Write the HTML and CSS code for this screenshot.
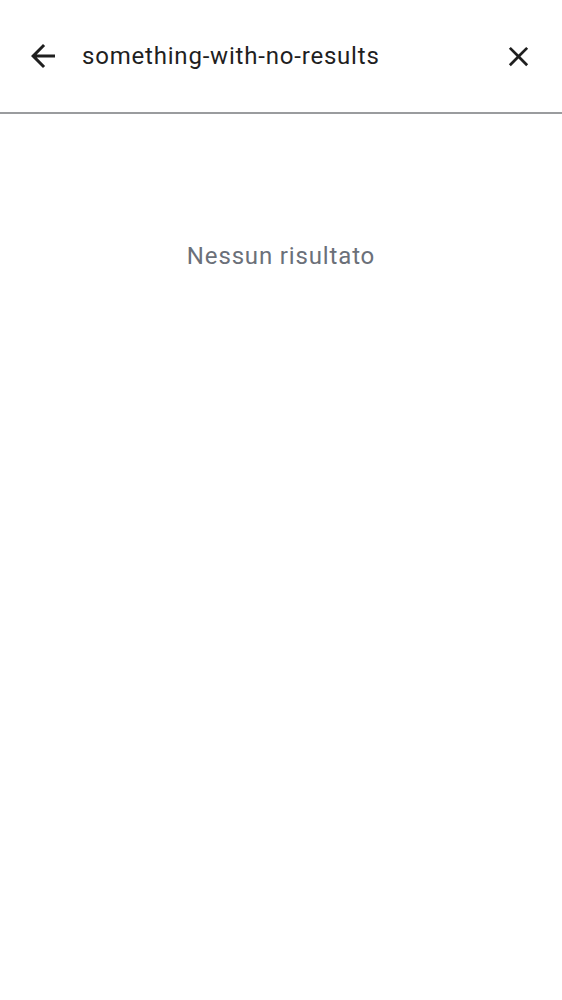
FILE: index.html
```html
<!DOCTYPE html>
<html lang="it">
<head>
<meta charset="utf-8">
<link rel="stylesheet" href="styles.css">
</head>
<body>
<div class="app">
  <header class="search-bar">
    <button class="icon-btn back" aria-label="Indietro">
      <svg viewBox="0 0 24 24" width="36" height="36"><path d="M20 11H7.83l5.59-5.59L12 4l-8 8 8 8 1.41-1.41L7.83 13H20v-2z" fill="#1f1f1f"/></svg>
    </button>
    <div class="query">something-with-no-results</div>
    <button class="icon-btn close" aria-label="Cancella">
      <svg viewBox="0 0 24 24" width="33" height="33"><path d="M19 6.41 17.59 5 12 10.59 6.41 5 5 6.41 10.59 12 5 17.59 6.41 19 12 13.41 17.59 19 19 17.59 13.41 12z" fill="#1f1f1f"/></svg>
    </button>
  </header>
  <main class="results">
    <p class="empty">Nessun risultato</p>
  </main>
</div>
</body>
</html>
```
FILE: styles.css
```css
html, body {
  margin: 0;
  padding: 0;
  background: #ffffff;
}
body {
  font-family: Roboto, "Noto Sans", sans-serif;
}
.app {
  width: 562px;
  min-height: 1000px;
}
.search-bar {
  display: flex;
  align-items: center;
  height: 112px;
  border-bottom: 2px solid #9a9c9e;
  box-sizing: content-box;
  padding: 0 26px 0 25px;
}
.icon-btn {
  border: 0;
  background: none;
  padding: 0;
  width: 36px;
  height: 36px;
  display: flex;
  align-items: center;
  justify-content: center;
  cursor: pointer;
}
.query {
  flex: 1;
  margin-left: 21px;
  font-size: 24px;
  color: #1f1f1f;
  letter-spacing: 0.8px;
}
.results {
  display: flex;
  justify-content: center;
  padding-top: 128px;
}
.empty {
  margin: 0;
  font-size: 24px;
  color: #6b7079;
  letter-spacing: 0.85px;
}
```
